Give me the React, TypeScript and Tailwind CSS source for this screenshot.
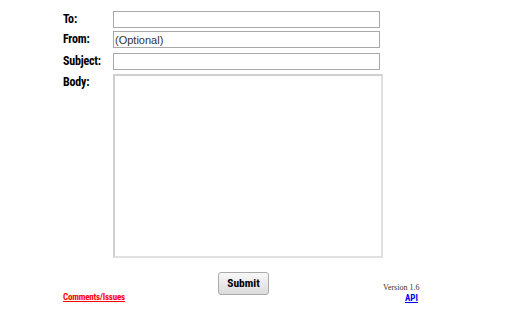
const impact = { fontFamily: "Impact, 'Roboto Condensed', 'Open Sans Condensed', sans-serif" };

function Label({ text }: { text: string }) {
  return (
    <label className="w-[50px] shrink-0 text-[12px] font-bold leading-[16px] tracking-[-0.2px] text-black" style={impact}>
      {text}
    </label>
  );
}

export default function App() {
  return (
    <div className="w-[512px] h-[320px] bg-white relative" style={{ fontFamily: "Arial, 'Liberation Sans', sans-serif" }}>
      <div className="pl-[63px] pt-[11px] w-[424px]">
        <div className="flex items-start h-[17px]">
          <Label text="To:" />
          <input className="w-[267px] h-[17px] border border-[#a9a9a9] px-[1px] text-[11px] outline-none" />
        </div>
        <div className="flex items-start h-[17px] mt-[3px]">
          <Label text="From:" />
          <input
            defaultValue="(Optional)"
            className="w-[267px] h-[17px] border border-[#a9a9a9] px-[1px] text-[11px] text-[#333] outline-none"
          />
        </div>
        <div className="flex items-start h-[17px] mt-[5px]">
          <Label text="Subject:" />
          <input className="w-[267px] h-[17px] border border-[#a9a9a9] px-[1px] text-[11px] outline-none" />
        </div>
        <div className="flex items-start mt-[4px]">
          <Label text="Body:" />
          <textarea className="w-[270px] h-[184px] border-2 border-[#e0e0e0] border-t-[#cfcfcf] border-l-[#cfcfcf] resize-none outline-none text-[11px]" />
        </div>
        <div className="flex mt-[12px] h-[34px]">
          <div className="w-[155px] flex items-end">
            <a href="#" className="text-[9px] font-bold tracking-[-0.2px] text-[#ff0000] underline leading-[11px] mb-[1px]" style={impact}>
              Comments/Issues
            </a>
          </div>
          <div className="w-[165px]">
            <button
              className="w-[51px] h-[23px] border border-[#aaa] rounded-[3px] bg-gradient-to-b from-[#f8f8f8] to-[#dcdcdc] text-[11.5px] font-bold text-black"
              style={impact}
            >
              Submit
            </button>
          </div>
          <div className="flex flex-col items-start pt-[13px]">
            <span className="text-[8px] leading-[10px] text-[#333]" style={{ fontFamily: "'Liberation Serif', 'Times New Roman', serif" }}>
              Version 1.6
            </span>
            <a href="#" className="ml-[22px] text-[9px] font-bold leading-[11px] text-[#0000ee] underline" style={impact}>
              API
            </a>
          </div>
        </div>
      </div>
    </div>
  );
}
